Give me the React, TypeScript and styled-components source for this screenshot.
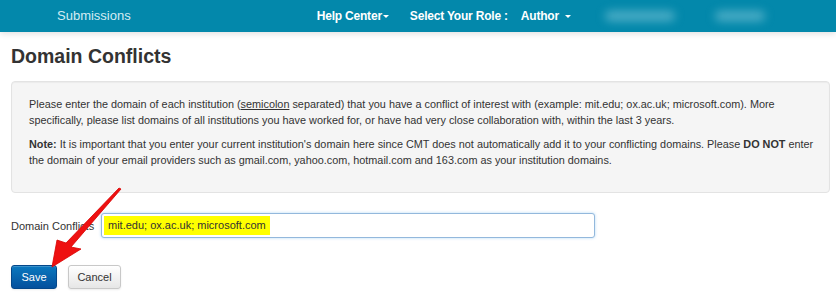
import * as React from 'react';
import styled, { createGlobalStyle } from 'styled-components';

const GlobalStyle = createGlobalStyle`
  html, body {
    margin: 0;
    padding: 0;
    background: #fff;
  }
  body {
    font-family: "Liberation Sans", Arial, sans-serif;
    color: #333;
  }
`;

const Page = styled.div`
  position: relative;
  width: 836px;
  height: 306px;
  overflow: hidden;
  background: #fff;
`;

const NavBar = styled.div`
  height: 32px;
  background: #0388ab;
  display: flex;
  align-items: center;
  box-shadow: 0 2px 6px rgba(0, 0, 0, 0.12);
  position: relative;
  z-index: 1;
`;

const NavItem = styled.div<{ $bold?: boolean; $left: number }>`
  margin-left: ${p => p.$left}px;
  font-size: ${p => (p.$bold ? 12 : 13)}px;
  font-weight: ${p => (p.$bold ? 700 : 400)};
  color: ${p => (p.$bold ? '#ffffff' : '#d3ecf3')};
  letter-spacing: ${p => (p.$bold ? '-0.2px' : '0')};
  white-space: nowrap;
  display: flex;
  align-items: center;
  line-height: 32px;
`;

const Caret = styled.span<{ $gap: number }>`
  display: inline-block;
  margin-left: ${p => p.$gap}px;
  width: 0;
  height: 0;
  border-left: 3px solid transparent;
  border-right: 3px solid transparent;
  border-top: 3px solid #fff;
`;

// blurred-out user names on the right of the bar
const Blur = styled.div<{ $w: number; $left: number }>`
  margin-left: ${p => p.$left}px;
  width: ${p => p.$w}px;
  height: 10px;
  border-radius: 5px;
  background: rgba(140, 205, 222, 0.55);
  filter: blur(5px);
`;

const Content = styled.div`
  padding: 13px 6px 0 11px;
`;

const Title = styled.h1`
  margin: 0 0 14px;
  font-size: 19.5px;
  line-height: 22px;
  font-weight: 700;
  color: #333;
`;

const Well = styled.div`
  background: #f5f5f5;
  border: 1px solid #e3e3e3;
  border-radius: 4px;
  padding: 14px 11px 15px 17px;
  box-shadow: inset 0 1px 1px rgba(0, 0, 0, 0.04);
  height: 81px;
`;

const Para = styled.p`
  margin: 0 0 8px;
  font-size: 10.85px;
  line-height: 16px;
  color: #333;
`;

const Under = styled.span`
  text-decoration: underline;
`;

const FormRow = styled.div`
  display: flex;
  align-items: center;
  margin-top: 20px;
`;

const Label = styled.label`
  width: 90px;
  font-size: 11px;
  color: #333;
`;

const Field = styled.div`
  width: 490px;
  height: 23px;
  border: 1px solid #93b8dc;
  border-radius: 3px;
  box-shadow: 0 0 3px rgba(82, 168, 236, 0.45);
  display: flex;
  align-items: center;
  padding-left: 2px;
  background: #fff;
`;

const Highlight = styled.span`
  background: #ffff00;
  font-size: 11px;
  line-height: 19px;
  padding: 0 4px 0 4px;
  color: #333;
`;

const Actions = styled.div`
  display: flex;
  gap: 11px;
  margin-top: 27px;
`;

const Btn = styled.button<{ $primary?: boolean }>`
  height: 24px;
  min-width: ${p => (p.$primary ? 46 : 53)}px;
  padding: 0 8px;
  font-family: "Liberation Sans", Arial, sans-serif;
  font-size: 11px;
  border-radius: 3px;
  border: 1px solid ${p => (p.$primary ? '#04478a' : '#c8c8c8')};
  color: ${p => (p.$primary ? '#fff' : '#333')};
  background: ${p =>
    p.$primary
      ? 'linear-gradient(#0a78bf, #04509d)'
      : 'linear-gradient(#ffffff, #e6e6e6)'};
  box-shadow: inset 0 1px 0 rgba(255, 255, 255, 0.2), 0 1px 2px rgba(0, 0, 0, 0.08);
  cursor: pointer;
`;

const Arrow = styled.svg`
  position: absolute;
  left: 0;
  top: 0;
  pointer-events: none;
  z-index: 2;
`;

export default function App() {
  return (
    <Page>
      <GlobalStyle />
      <NavBar>
        <NavItem $left={57}>Submissions</NavItem>
        <NavItem $bold $left={186}>
          Help Center<Caret $gap={1} />
        </NavItem>
        <NavItem $bold $left={21}>Select Your Role :</NavItem>
        <NavItem $bold $left={13}>
          Author<Caret $gap={6} />
        </NavItem>
        <Blur $w={70} $left={34} />
        <Blur $w={50} $left={40} />
      </NavBar>
      <Content>
        <Title>Domain Conflicts</Title>
        <Well>
          <Para>
            Please enter the domain of each institution (<Under>semicolon</Under> separated) that you have a
            conflict of interest with (example: mit.edu; ox.ac.uk; microsoft.com). More specifically, please
            list domains of all institutions you have worked for, or have had very close collaboration with,
            within the last 3 years.
          </Para>
          <Para>
            <b>Note:</b> It is important that you enter your current institution's domain here since CMT does
            not automatically add it to your conflicting domains. Please <b>DO NOT</b> enter the domain of your
            email providers such as gmail.com, yahoo.com, hotmail.com and 163.com as your institution domains.
          </Para>
        </Well>
        <FormRow>
          <Label>Domain Conflicts</Label>
          <Field>
            <Highlight>mit.edu; ox.ac.uk; microsoft.com</Highlight>
          </Field>
        </FormRow>
        <Actions>
          <Btn $primary>Save</Btn>
          <Btn>Cancel</Btn>
        </Actions>
      </Content>
      <Arrow width="836" height="306" viewBox="0 0 836 306">
        <polygon
          points="121,189 71,247 81,249 52,267 57,240 66,243 119,188"
          fill="#ee1111"
          stroke="#d80000"
          strokeWidth="0.8"
          strokeLinejoin="round"
        />
      </Arrow>
    </Page>
  );
}
